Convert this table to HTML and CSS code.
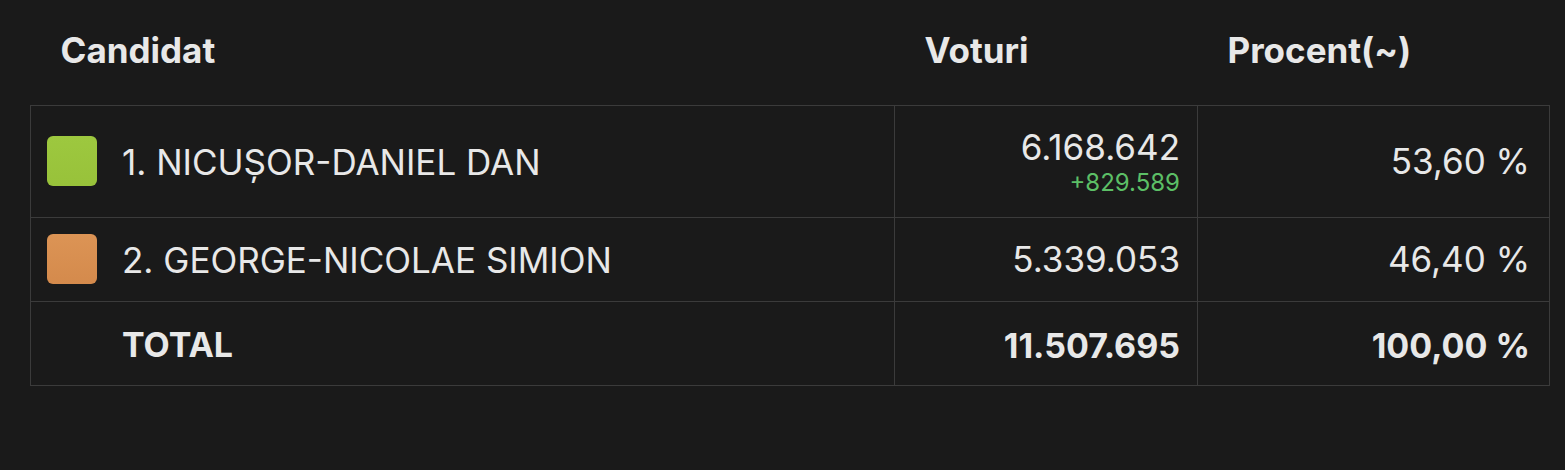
FILE: index.html
```html
<!DOCTYPE html>
<html lang="ro">
<head>
<meta charset="utf-8">
<title>Rezultate</title>
<link rel="stylesheet" href="styles.css">
</head>
<body>
<div class="wrap">
  <table class="results">
    <colgroup>
      <col class="c-name">
      <col class="c-votes">
      <col class="c-pct">
    </colgroup>
    <thead>
      <tr>
        <th>Candidat</th>
        <th>Voturi</th>
        <th>Procent(~)</th>
      </tr>
    </thead>
    <tbody>
      <tr class="row-first">
        <td>
          <div class="cand">
            <span class="swatch swatch-green"></span>
            <span class="cand-name">1. NICUȘOR-DANIEL DAN</span>
          </div>
        </td>
        <td class="num">
          <div class="votes">6.168.642</div>
          <div class="delta">+829.589</div>
        </td>
        <td class="num pct">53,60 %</td>
      </tr>
      <tr>
        <td>
          <div class="cand">
            <span class="swatch swatch-orange"></span>
            <span class="cand-name">2. GEORGE-NICOLAE SIMION</span>
          </div>
        </td>
        <td class="num">5.339.053</td>
        <td class="num pct">46,40 %</td>
      </tr>
      <tr class="total">
        <td><div class="cand"><span class="swatch-spacer"></span><span class="cand-name">TOTAL</span></div></td>
        <td class="num">11.507.695</td>
        <td class="num pct">100,00 %</td>
      </tr>
    </tbody>
  </table>
</div>
</body>
</html>
```

FILE: styles.css
```css
html, body {
  margin: 0;
  padding: 0;
  background: #1a1a1a;
}
body {
  font-family: Inter, "Noto Sans", "Liberation Sans", sans-serif;
  color: #e8e8e8;
  width: 1565px;
  height: 470px;
  overflow: hidden;
}
.wrap {
  padding: 0 16px 0 30px;
}
.results {
  width: 1519px;
  border-collapse: collapse;
  table-layout: fixed;
}
.c-name { width: 864px; }
.c-votes { width: 303px; }
.c-pct { width: 352px; }

.results th {
  text-align: left;
  font-weight: 700;
  font-size: 35px;
  height: 105px;
  padding: 0 0 4px 30px;
  box-sizing: border-box;
  vertical-align: middle;
  color: #e8e8e8;
}
.results td {
  border: 1px solid #3b3b3b;
  height: 84px;
  box-sizing: border-box;
  padding: 0 17px 0 16px;
  font-size: 35px;
  vertical-align: middle;
}
.results td.pct {
  padding-right: 19px;
}
.results .row-first td {
  height: 112px;
}
.num {
  text-align: right;
}
.cand {
  display: flex;
  align-items: center;
  gap: 25px;
}
.swatch, .swatch-spacer {
  width: 50px;
  height: 50px;
  border-radius: 6px;
  flex: none;
}
.swatch-green {
  background: linear-gradient(180deg, #9dc83f 0%, #98c23a 100%);
}
.swatch-orange {
  background: linear-gradient(180deg, #dc9455 0%, #d48a4c 100%);
}
.cand-name {
  padding-top: 2px;
}
.votes {
  line-height: 42px;
}
.delta {
  font-size: 24px;
  line-height: 29px;
  color: #5cbf66;
}
.total td {
  font-weight: 700;
  font-size: 34px;
}
.total .num {
  padding-top: 4px;
}
```
